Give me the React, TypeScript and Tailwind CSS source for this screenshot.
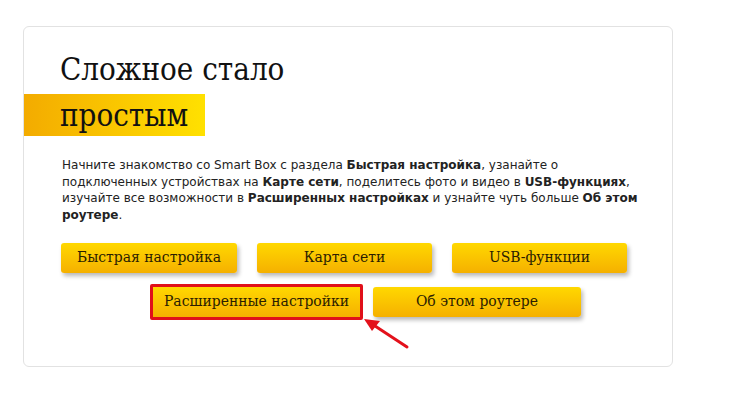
import React from 'react';

const serif = { fontFamily: '"DejaVu Serif Condensed", "DejaVu Serif", "Liberation Serif", serif', fontStretch: 'semi-condensed' };

function YellowButton({ label, className = '' }: { label: string; className?: string }) {
  return (
    <div
      className={`flex items-center justify-center h-[30px] rounded-[3px] bg-gradient-to-b from-[#ffd800] to-[#f5b000] text-[#2b1d00] text-[15.5px] shadow-[2px_3px_4px_rgba(0,0,0,0.28)] ${className}`}
      style={serif}
    >
      {label}
    </div>
  );
}

export default function App() {
  return (
    <div className="w-[742px] h-[401px] bg-white relative overflow-hidden">
      <div className="ml-[23px] mt-[26px] w-[650px] h-[341px] border border-[#e2e2e2] rounded-[6px] bg-white">
        <h1 className="pl-[36px] pt-[22px] text-[31px] leading-[40px] text-[#111]" style={serif}>
          Сложное стало
        </h1>
        <div className="mt-[5px] w-[181px] h-[42px] bg-gradient-to-r from-[#f3ab00] to-[#ffe100] flex items-center pl-[36px]">
          <span className="text-[31px] leading-[40px] text-[#111] -mt-[1px]" style={serif}>простым</span>
        </div>
        <p
          className="mt-[21px] pl-[38px] text-[12px] leading-[16.5px] text-[#222]"
          style={{ fontFamily: '"DejaVu Sans", Verdana, sans-serif' }}
        >
          Начните знакомство со Smart Box с раздела <b>Быстрая настройка</b>, узанайте о
          <br />
          подключенных устройствах на <b>Карте сети</b>, поделитесь фото и видео в <b>USB-функциях</b>,
          <br />
          изучайте все возможности в <b>Расширенных настройках</b> и узнайте чуть больше <b>Об этом</b>
          <br />
          <b>роутере</b>.
        </p>
        <div className="mt-[20px] pl-[37px] flex gap-[20px]">
          <YellowButton label="Быстрая настройка" className="w-[176px]" />
          <YellowButton label="Карта сети" className="w-[175px]" />
          <YellowButton label="USB-функции" className="w-[175px]" />
        </div>
        <div className="mt-[11px] pl-[126px] flex items-start gap-[10px]">
          <div className="border-[3px] border-[#e0101a] rounded-[2px]">
            <YellowButton label="Расширенные настройки" className="w-[207px] h-[26px] shadow-none rounded-none" />
          </div>
          <YellowButton label="Об этом роутере" className="mt-[3px] w-[208px] h-[28px]" />
        </div>
      </div>
      <svg className="absolute left-[360px] top-[314px]" width="54" height="40" viewBox="0 0 54 40">
        <line x1="47" y1="33" x2="12" y2="10" stroke="#e3111b" strokeWidth="3" strokeLinecap="round" />
        <polygon points="4,5 20,7 12,17" fill="#e3111b" />
      </svg>
    </div>
  );
}
